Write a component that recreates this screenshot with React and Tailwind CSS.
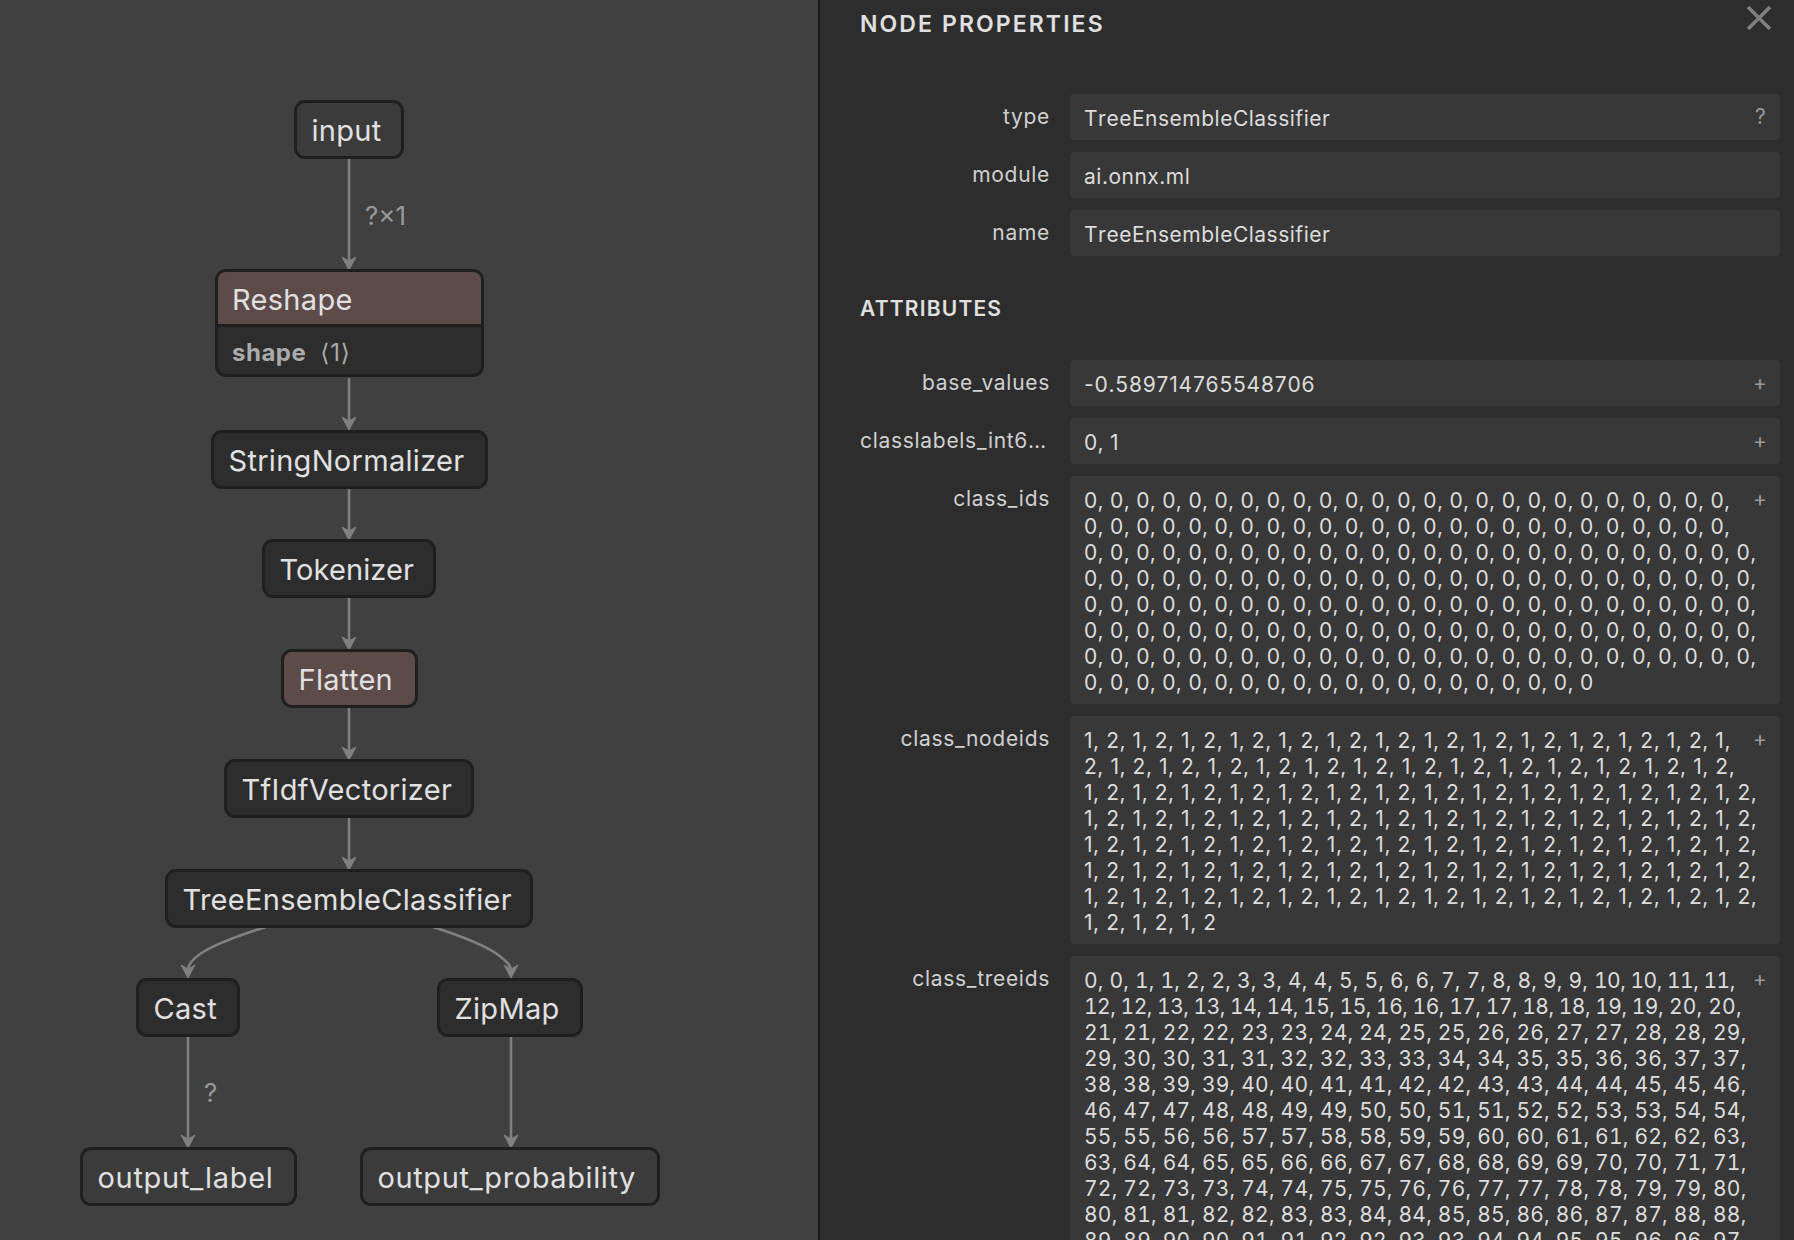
import React from "react";

const font = { fontFamily: "Inter, 'Noto Sans', sans-serif" };

const nodes = [
  { label: "input", className: "left-[294px] top-[100px] w-[110px] bg-[#3b3b3b] tracking-[0.3px]" },
  { label: "StringNormalizer", className: "left-[211px] top-[430px] w-[277px] bg-[#2d2d2d] tracking-[0.3px]" },
  { label: "Tokenizer", className: "left-[262px] top-[539px] w-[174px] bg-[#2d2d2d] tracking-[0.1px]" },
  { label: "Flatten", className: "left-[281px] top-[649px] w-[137px] bg-[#5c4b49] tracking-[0.3px]" },
  { label: "TfIdfVectorizer", className: "left-[224px] top-[759px] w-[250px] bg-[#2d2d2d] tracking-[0.3px]" },
  { label: "TreeEnsembleClassifier", className: "left-[165px] top-[869px] w-[368px] bg-[#2d2d2d] tracking-[0.3px]" },
  { label: "Cast", className: "left-[136px] top-[978px] w-[104px] bg-[#2d2d2d] tracking-[0.3px]" },
  { label: "ZipMap", className: "left-[437px] top-[978px] w-[146px] bg-[#2d2d2d] tracking-[0.3px]" },
  { label: "output_label", className: "left-[80px] top-[1147px] w-[217px] bg-[#3b3b3b] tracking-[0.7px]" },
  { label: "output_probability", className: "left-[360px] top-[1147px] w-[300px] bg-[#3b3b3b] tracking-[0.6px]" },
];

const Arrow = ({ x, y }) => (
  <path d={`M${x - 7} ${y - 13} L${x} ${y - 9} L${x + 7} ${y - 13} L${x} ${y} Z`} fill="#808080" stroke="#808080" strokeWidth="1" strokeLinejoin="round" />
);

const Edges = () => (
  <svg className="absolute left-0 top-0" width="818" height="1240" fill="none">
    <g stroke="#808080" strokeWidth="2.5">
      <path d="M349 159V262" />
      <path d="M349 378V422" />
      <path d="M349 488V532" />
      <path d="M349 598V642" />
      <path d="M349 708V752" />
      <path d="M349 818V862" />
      <path d="M266 927C240 935 212 946 200 954C193 959 188 964 188 970" />
      <path d="M433 927C458 935 484 945 497 954C505 960 511 965 511 970" />
      <path d="M188 1037V1140" />
      <path d="M511 1037V1140" />
    </g>
    <Arrow x={349} y={270} />
    <Arrow x={349} y={430} />
    <Arrow x={349} y={540} />
    <Arrow x={349} y={650} />
    <Arrow x={349} y={760} />
    <Arrow x={349} y={870} />
    <Arrow x={188} y={978} />
    <Arrow x={511} y={978} />
    <Arrow x={188} y={1148} />
    <Arrow x={511} y={1148} />
  </svg>
);

const GraphNode = ({ label, className }) => (
  <div className={`absolute h-[59px] rounded-[11px] border-[3px] border-[#1f1f1f] pl-[14.5px] pt-[10px] text-[29px] leading-[36px] text-[#e0e0e0] whitespace-nowrap ${className}`}>
    {label}
  </div>
);

const Graph = () => (
  <div className="relative w-[818px] shrink-0 bg-[#404040]">
    <Edges />
    {nodes.map((n) => (
      <GraphNode key={n.label} {...n} />
    ))}
    <div className="absolute left-[215px] top-[269px] w-[269px] overflow-hidden rounded-[11px] border-[3px] border-[#1f1f1f] bg-[#2d2d2d] whitespace-nowrap">
      <div className="h-[55px] border-b-[3px] border-[#1f1f1f] bg-[#5c4b49] pl-[14px] pt-[10px] text-[29px] leading-[36px] tracking-[0.3px] text-[#e0e0e0]">Reshape</div>
      <div className="flex h-[47px] items-center gap-[14px] pl-[14px] pt-[4px] text-[24px] tracking-[0.5px] text-[#aaaaaa]">
        <b className="font-bold">shape</b>
        <span>
          <span className="[font-family:'DejaVu_Sans',sans-serif]">⟨</span>1<span className="[font-family:'DejaVu_Sans',sans-serif]">⟩</span>
        </span>
      </div>
    </div>
    <span className="absolute left-[365px] top-[201px] text-[26px] leading-[30px] text-[#999999]">?×1</span>
    <span className="absolute left-[204px] top-[1078px] text-[26px] leading-[30px] text-[#999999]">?</span>
  </div>
);

const Row = ({ label, value, mark, tall, spacing = "tracking-[0.5px]" }) => (
  <div className="flex gap-[20px]">
    <div className="w-[190px] shrink-0 truncate pt-[10px] text-right text-[21px] leading-[26px] tracking-[0.7px] text-[#d0d0d0]">{label}</div>
    <div className={`min-w-0 flex-1 rounded-[4px] bg-[#383838] pb-[8px] pl-[14px] pr-[18px] pt-[12px] text-[21px] leading-[26px] text-[#dcdcdc] [font-kerning:none] ${spacing}`}>
      {mark && (
        <span className={`float-right -mt-[2px] w-[16px] text-[#999999] ${mark === "?" ? "pl-[9px]" : "pl-[7px]"} ${tall ? "h-[32px]" : "h-[26px]"}`}>{mark}</span>
      )}
      {value}
    </div>
  </div>
);

const zeros = Array(200).fill(0).join(", ");
const nodeIds = Array.from({ length: 200 }, (_, i) => (i % 2) + 1).join(", ");
const treeIds = Array.from({ length: 220 }, (_, i) => Math.floor(i / 2));

// the teens run tighter than the other two-digit numbers
const treeIdsText = (
  <>
    {treeIds.filter((n) => n < 10).join(", ")},{" "}
    <span className="tracking-[-0.5px]">{treeIds.filter((n) => n >= 10 && n < 20).join(", ")},</span>{" "}
    {treeIds.filter((n) => n >= 20).join(", ")}
  </>
);

const Properties = () => (
  <div className="relative min-w-0 flex-1 border-l-2 border-[#1a1a1a] bg-[#2d2d2d] pl-[40px] pr-[14px]">
    <h1 className="pt-[10px] text-[23px] font-semibold leading-[28px] tracking-[2.1px] text-[#e0e0e0]">NODE PROPERTIES</h1>
    <svg className="absolute right-[21px] top-[4px]" width="28" height="28" viewBox="0 0 28 28" fill="none" stroke="#808080" strokeWidth="3.5">
      <path d="M3 3L25 25M25 3L3 25" />
    </svg>
    <div className="mt-[56px] flex flex-col gap-[12px]">
      <Row label="type" value="TreeEnsembleClassifier" mark="?" />
      <Row label="module" value="ai.onnx.ml" />
      <Row label="name" value="TreeEnsembleClassifier" />
    </div>
    <h2 className="mb-[38px] mt-[40px] text-[21px] font-semibold leading-[26px] tracking-[1.2px] text-[#e0e0e0]">ATTRIBUTES</h2>
    <div className="flex flex-col gap-[12px]">
      <Row label="base_values" value="-0.589714765548706" mark="+" spacing="tracking-[0.8px]" />
      <Row label="classlabels_int64s" value="0, 1" mark="+" spacing="tracking-[0.3px]" />
      <Row label="class_ids" value={zeros} mark="+" tall spacing="tracking-[0.3px]" />
      <Row label="class_nodeids" value={nodeIds} mark="+" tall spacing="tracking-[0.55px]" />
      <Row label="class_treeids" value={treeIdsText} mark="+" tall spacing="tracking-[0.2px] tabular-nums" />
    </div>
  </div>
);

export default function App() {
  return (
    <div className="flex h-[1240px] w-[1794px] overflow-hidden bg-[#404040]" style={font}>
      <Graph />
      <Properties />
    </div>
  );
}
